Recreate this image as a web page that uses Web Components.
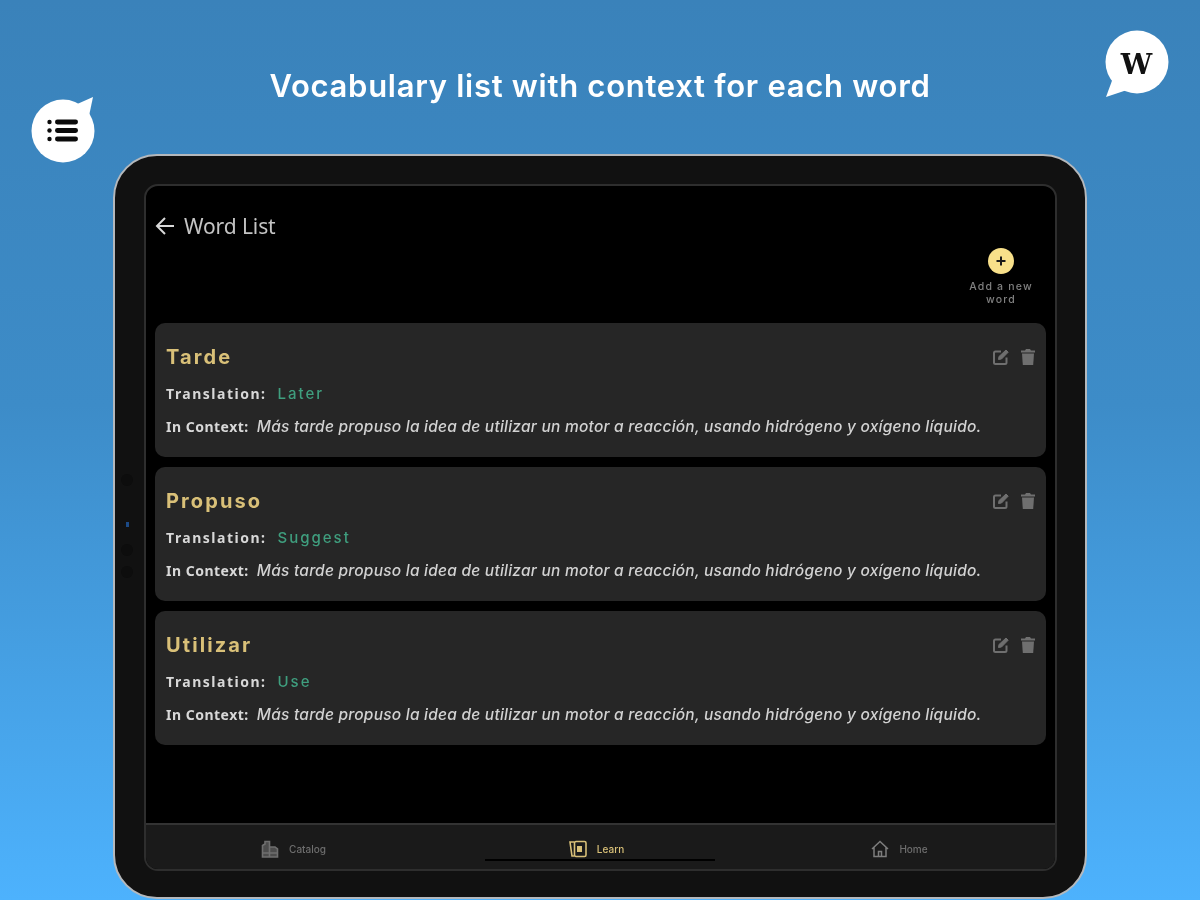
<!DOCTYPE html>
<html lang="en">
<head>
<meta charset="utf-8">
<title>Word List</title>
<style>
html, body { margin: 0; padding: 0; }
body { font-family: "Inter", "Liberation Sans", sans-serif; }
</style>
</head>
<body>
<promo-page>
    <span slot="title">Vocabulary list with context for each word</span>
    <tablet-frame>
        <list-header title-text="Word List"></list-header>
        <add-word></add-word>
        <div slot="list">
            <word-card word="Tarde" translation="Later"></word-card>
            <word-card word="Propuso" translation="Suggest"></word-card>
            <word-card word="Utilizar" translation="Use"></word-card>
        </div>
        <bottom-nav slot="nav"></bottom-nav>
    </tablet-frame>
</promo-page>

<script>
//#region promo page
const pageTemplate = document.createElement("template")
pageTemplate.innerHTML = /*html*/`
    <style>
    :host {
        display: flex;
        flex-direction: column;
        align-items: center;
        position: relative;
        width: 1200px;
        height: 900px;
        overflow: hidden;
        background: linear-gradient(180deg, #3a82ba 0%, #3d8cc8 45%, #4db2fd 100%);
        filter: blur(0.35px);
    }
    h1 {
        margin: 0;
        padding-top: 67px;
        height: 154px;
        box-sizing: border-box;
        font: 600 31px/38px "Inter", "Liberation Sans", sans-serif;
        letter-spacing: 0.72px;
        color: #fff;
        white-space: nowrap;
    }
    .bubble { position: absolute; }
    .list-bubble { left: 31px; top: 96px; }
    .w-bubble { left: 1105px; top: 30px; }
    .w {
        position: absolute;
        left: 0;
        top: 15px;
        width: 63px;
        text-align: center;
        font: 700 28px/40px "DejaVu Serif", "Liberation Serif", serif;
        color: #111;
    }
    </style>
    <h1><slot name="title"></slot></h1>
    <slot></slot>
    <div class="bubble list-bubble">
        <svg width="64" height="68" viewBox="0 0 64 68">
            <circle cx="32" cy="35" r="31.5" fill="#fff"/>
            <path d="M44 9 L62 1 L58 20 Z" fill="#fff"/>
            <g fill="#0b0b0b">
                <circle cx="18.5" cy="26" r="2.2"/><circle cx="18.5" cy="34.5" r="2.2"/><circle cx="18.5" cy="43" r="2.2"/>
                <rect x="24" y="23.5" width="23" height="5" rx="2.4"/>
                <rect x="24" y="32" width="23" height="5" rx="2.4"/>
                <rect x="24" y="40.5" width="23" height="5" rx="2.4"/>
            </g>
        </svg>
    </div>
    <div class="bubble w-bubble">
        <svg width="64" height="68" viewBox="0 0 64 68" style="display:block">
            <circle cx="32" cy="32" r="31.5" fill="#fff"/>
            <path d="M8 48 L1 67 L22 60 Z" fill="#fff"/>
        </svg>
        <span class="w">W</span>
    </div>
`
class PromoPage extends HTMLElement
{
    constructor(){
        super();
        this.attachShadow({mode: "open"}).append(pageTemplate.content.cloneNode(true))
    }
}
customElements.define("promo-page", PromoPage);
//#endregion

//#region tablet
const tabletTemplate = document.createElement("template")
tabletTemplate.innerHTML = /*html*/`
    <style>
    :host {
        display: block;
        box-sizing: border-box;
        width: 974px;
        height: 745px;
        flex: none;
        padding: 28px 28px 26px 29px;
        background: #111;
        border: 2px solid #b4b8bc;
        border-radius: 44px;
        position: relative;
    }
    .screen {
        box-sizing: border-box;
        height: 100%;
        display: flex;
        flex-direction: column;
        background: #000;
        border: 2px solid #2e2e2e;
        border-radius: 14px;
        overflow: hidden;
    }
    .top { position: relative; height: 137px; flex: none; }
    .list { flex: 1; padding: 0 9px; }
    .camera {
        position: absolute;
        left: 11px;
        top: 366px;
        width: 3px;
        height: 5px;
        background: #1c4a86;
    }
    .dot {
        position: absolute;
        left: 6px;
        width: 12px;
        height: 12px;
        border-radius: 50%;
        background: #0d0d0d;
    }
    </style>
    <div class="screen">
        <div class="top"><slot></slot></div>
        <div class="list"><slot name="list"></slot></div>
        <slot name="nav"></slot>
    </div>
    <span class="dot" style="top:318px"></span>
    <span class="camera"></span>
    <span class="dot" style="top:388px"></span>
    <span class="dot" style="top:410px"></span>
`
class TabletFrame extends HTMLElement
{
    constructor(){
        super();
        this.attachShadow({mode: "open"}).append(tabletTemplate.content.cloneNode(true))
    }
}
customElements.define("tablet-frame", TabletFrame);
//#endregion

//#region header
const headerTemplate = document.createElement("template")
headerTemplate.innerHTML = /*html*/`
    <style>
    :host {
        display: flex;
        align-items: center;
        gap: 10px;
        padding: 26px 0 0 9px;
        color: #c4c4c4;
        font: 400 21px/28px "Noto Sans", "Open Sans", sans-serif;
        letter-spacing: -0.1px;
    }
    svg { display: block; }
    </style>
    <svg width="19" height="20" viewBox="0 0 19 20" fill="none" stroke="#d8d8d8" stroke-width="2">
        <path d="M19 10 H2 M10 2 L2 10 L10 18"/>
    </svg>
    <span id="title"></span>
`
class ListHeader extends HTMLElement
{
    constructor(){
        super();
        this.attachShadow({mode: "open"}).append(headerTemplate.content.cloneNode(true))
        this.shadowRoot.querySelector("#title").textContent = this.getAttribute("title-text")
    }
}
customElements.define("list-header", ListHeader);

const addTemplate = document.createElement("template")
addTemplate.innerHTML = /*html*/`
    <style>
    :host {
        display: flex;
        flex-direction: column;
        align-items: center;
        position: absolute;
        right: 14px;
        top: 62px;
        width: 80px;
        color: #808080;
        font: 500 10.5px/13px "Inter", "Liberation Sans", sans-serif;
        letter-spacing: 1.2px;
        text-align: center;
    }
    svg { display: block; margin-bottom: 6px; }
    </style>
    <svg width="26" height="26" viewBox="0 0 26 26">
        <circle cx="13" cy="13" r="13" fill="#f8e08a"/>
        <path d="M13 8.5 V17.5 M8.5 13 H17.5" stroke="#1a1a1a" stroke-width="2"/>
    </svg>
    <span>Add a new<br>word</span>
`
class AddWord extends HTMLElement
{
    constructor(){
        super();
        this.attachShadow({mode: "open"}).append(addTemplate.content.cloneNode(true))
    }
}
customElements.define("add-word", AddWord);
//#endregion

//#region word card
const CONTEXT = "Más tarde propuso la idea de utilizar un motor a reacción, usando hidrógeno y oxígeno líquido."

const cardTemplate = document.createElement("template")
cardTemplate.innerHTML = /*html*/`
    <style>
    :host {
        display: block;
        box-sizing: border-box;
        height: 134px;
        margin-bottom: 10px;
        padding: 22px 10px 0 11px;
        background: #262626;
        border-radius: 10px;
        color: #d6d6d6;
        font-family: "Inter", "Liberation Sans", sans-serif;
    }
    .head { display: flex; align-items: center; justify-content: space-between; height: 24px; }
    .word { font-weight: 700; font-size: 20px; letter-spacing: 2.1px; color: #d9c078; }
    .icons { display: flex; gap: 10px; }
    svg { display: block; }
    .row { display: flex; align-items: center; height: 20px; white-space: nowrap; }
    .translation { margin-top: 14px; font-size: 14px; }
    .label { font-family: "Noto Sans", sans-serif; font-weight: 700; letter-spacing: 1.5px; color: #d8d8d8; }
    .value { margin-left: 11px; color: #3f9e7e; font-weight: 500; font-size: 15px; letter-spacing: 2px; }
    .context { margin-top: 13px; font-size: 14px; }
    .context .label { font-size: 14px; letter-spacing: 0.5px; }
    .text { margin-left: 8px; font-style: italic; font-size: 15.5px; letter-spacing: 0.23px; font-weight: 500; color: #d2d2d2; }
    </style>
    <div class="head">
        <span class="word"></span>
        <div class="icons">
            <svg width="18" height="18" viewBox="0 0 18 18" fill="none" stroke="#6f6f6f" stroke-width="2">
                <path d="M9 3.5 H3.5 Q2 3.5 2 5 V14.5 Q2 16 3.5 16 H13 Q14.5 16 14.5 14.5 V9.5"/>
                <path d="M6.5 11.5 L7 8.5 L14 2 L16.2 4.2 L9.5 11 Z" fill="#6f6f6f" stroke-width="1"/>
            </svg>
            <svg width="16" height="18" viewBox="0 0 16 18" fill="#6f6f6f">
                <path d="M1 2.5 H5 L6 1 H10 L11 2.5 H15 V4.5 H1 Z"/>
                <path d="M2 5.5 H14 L13.2 17 H2.8 Z"/>
            </svg>
        </div>
    </div>
    <div class="row translation"><span class="label">Translation:</span><span class="value"></span></div>
    <div class="row context"><span class="label">In Context:</span><span class="text"></span></div>
`
class WordCard extends HTMLElement
{
    constructor(){
        super();
        this.attachShadow({mode: "open"}).append(cardTemplate.content.cloneNode(true))
        this.shadowRoot.querySelector(".word").textContent = this.getAttribute("word")
        this.shadowRoot.querySelector(".value").textContent = this.getAttribute("translation")
        this.shadowRoot.querySelector(".text").textContent = CONTEXT
    }
}
customElements.define("word-card", WordCard);
//#endregion

//#region bottom nav
const navTemplate = document.createElement("template")
navTemplate.innerHTML = /*html*/`
    <style>
    :host {
        display: grid;
        grid-template-columns: 1fr 1fr 1fr;
        flex: none;
        height: 46px;
        box-sizing: border-box;
        padding-top: 3px;
        background: #1a1a1a;
        border-top: 2px solid #333;
        position: relative;
        font: 500 10px/14px "Inter", "Liberation Sans", sans-serif;
        color: #6e6e6e;
    }
    .item { display: flex; align-items: center; justify-content: center; gap: 10px; padding-right: 8px; }
    .item:first-child { padding-right: 16px; }
    .active { color: #d9c078; }
    svg { display: block; }
    .handle {
        position: absolute;
        left: 339px;
        bottom: 8px;
        width: 230px;
        height: 2px;
        background: #000;
    }
    </style>
    <div class="item">
        <svg width="18" height="18" viewBox="0 0 18 18" fill="#4d4d4d" stroke="#6f6f6f" stroke-width="1.6">
            <path d="M1.5 17 V5.5 L4 4 V1.5 H8.5 V17 Z M8.5 7 H14 L16.5 9 V17 H8.5 M1.5 13 H16.5"/>
        </svg>
        <span>Catalog</span>
    </div>
    <div class="item active">
        <svg width="18" height="18" viewBox="0 0 18 18" fill="none" stroke="#d9c078" stroke-width="1.6">
            <path d="M5 2 H1 L3 16 H5"/>
            <rect x="5.5" y="1.5" width="11.5" height="15" rx="1.5"/>
            <rect x="8" y="6" width="5" height="6" fill="#d9c078" stroke="none"/>
        </svg>
        <span>Learn</span>
    </div>
    <div class="item">
        <svg width="18" height="18" viewBox="0 0 18 18" fill="none" stroke="#7d7d7d" stroke-width="1.5">
            <path d="M1 9 L9 1.5 L17 9 M3 7.5 V16.5 H15 V7.5 M7.5 16.5 V11.5 H10.5 V16.5"/>
        </svg>
        <span>Home</span>
    </div>
    <span class="handle"></span>
`
class BottomNav extends HTMLElement
{
    constructor(){
        super();
        this.attachShadow({mode: "open"}).append(navTemplate.content.cloneNode(true))
    }
}
customElements.define("bottom-nav", BottomNav);
//#endregion
</script>
</body>
</html>
